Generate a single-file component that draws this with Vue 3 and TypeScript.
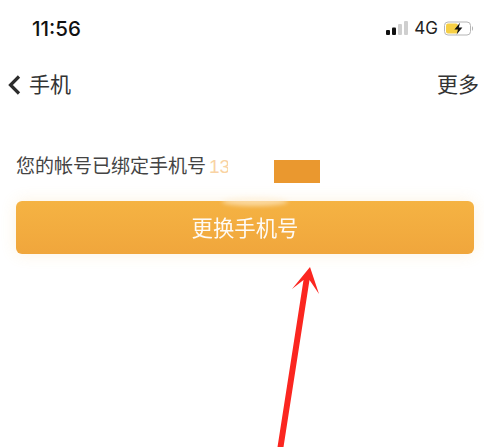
<script setup lang="ts">
const title = '手机'
</script>

<template>
  <div class="page">
    <div class="status">
      <span class="time">11:56</span>
      <div class="status-right">
        <svg class="signal" width="22" height="16" viewBox="0 0 22 16">
          <rect x="0" y="10" width="4" height="5" rx="1" fill="#111" />
          <rect x="6" y="7.5" width="4" height="7.5" rx="1" fill="#111" />
          <rect x="12" y="4" width="4" height="11" rx="1" fill="#cfcfcf" />
          <rect x="18" y="1" width="4" height="14" rx="1" fill="#cfcfcf" />
        </svg>
        <span class="net">4G</span>
        <svg class="battery" width="31" height="15" viewBox="0 0 31 15">
          <rect x="0.5" y="1" width="26" height="13" rx="3.5" fill="none" stroke="#b5b5b5" />
          <rect x="2" y="2.5" width="12" height="10" rx="2" fill="#f6cf45" />
          <path d="M28 5.2c1.4.4 1.4 4.2 0 4.6z" fill="#b5b5b5" />
          <path d="M16 1.8 10.4 8.4h3.6l-1.4 5 5.8-6.8h-3.6z" fill="#111" />
        </svg>
      </div>
    </div>

    <header class="nav">
      <div class="nav-left">
        <svg width="14" height="22" viewBox="0 0 14 22">
          <path d="M12 2.5 3.5 11l8.5 8.5" fill="none" stroke="#2c2c2c" stroke-width="3.2" />
        </svg>
        <span class="title">{{ title }}</span>
      </div>
      <span class="more">更多</span>
    </header>

    <main class="content">
      <p class="line">
        您的帐号已绑定手机号<span class="num">13</span>
        <span class="mask-white"></span>
        <span class="mask-orange"></span>
      </p>
      <button class="action" type="button">
        <span class="label">更换手机号</span>
        <span class="glow"></span>
      </button>
    </main>

    <svg class="arrow" width="484" height="447" viewBox="0 0 484 447">
      <path d="M310 267 319 294 309.5 280 283.5 447 277.5 447 303.5 280 292 289Z" fill="#fb2620" />
    </svg>
  </div>
</template>

<style>
html, body { margin: 0; background: #fff; }
</style>

<style scoped>
.page {
  position: relative;
  width: 484px;
  height: 447px;
  overflow: hidden;
  background: #fff;
  font-family: "Liberation Sans", "Noto Sans CJK SC", sans-serif;
}
.status {
  display: flex;
  align-items: center;
  justify-content: space-between;
  height: 28px;
  padding: 14px 9px 0 32px;
}
.time {
  font-family: Inter, "Liberation Sans", sans-serif;
  font-size: 20.5px;
  font-weight: 500;
  color: #111;
}
.status-right {
  display: flex;
  align-items: center;
  gap: 6px;
}
.net {
  font-family: Inter, "Liberation Sans", sans-serif;
  font-size: 17px;
  color: #222;
}
.nav {
  display: flex;
  align-items: center;
  justify-content: space-between;
  height: 30px;
  margin-top: 28px;
  padding: 0 5px 0 7px;
  color: #333;
}
.nav-left {
  display: flex;
  align-items: center;
  gap: 8px;
}
.title,
.more {
  font-size: 21px;
  line-height: 30px;
}
.content {
  padding: 60px 10px 0 16px;
}
.line {
  position: relative;
  margin: 0;
  height: 24px;
  line-height: 14px;
  font-size: 19px;
  color: #444;
}
.num {
  margin-left: 3px;
  color: #f9d3a4;
}
.mask-white {
  position: absolute;
  left: 212px;
  top: -2px;
  width: 50px;
  height: 28px;
  background: rgba(255, 255, 255, 0.96);
}
.mask-orange {
  position: absolute;
  left: 258px;
  top: 0;
  width: 46px;
  height: 23px;
  background: #ea982f;
}
.action {
  position: relative;
  display: block;
  width: 100%;
  height: 53px;
  margin-top: 17px;
  padding: 0 0 3px;
  border: 0;
  border-radius: 6px;
  overflow: visible;
  background: linear-gradient(#f5b343, #f0a63c);
  box-shadow: 0 0 16px rgba(245, 179, 67, 0.16);
  color: #fff;
  font-family: inherit;
  font-size: 21.4px;
}
.label {
  opacity: 0.95;
}
.glow {
  position: absolute;
  left: 206px;
  top: -4px;
  width: 66px;
  height: 9px;
  border-radius: 50%;
  background: rgba(255, 240, 215, 0.6);
  filter: blur(2px);
}
.arrow {
  position: absolute;
  left: 0;
  top: 0;
}
</style>
